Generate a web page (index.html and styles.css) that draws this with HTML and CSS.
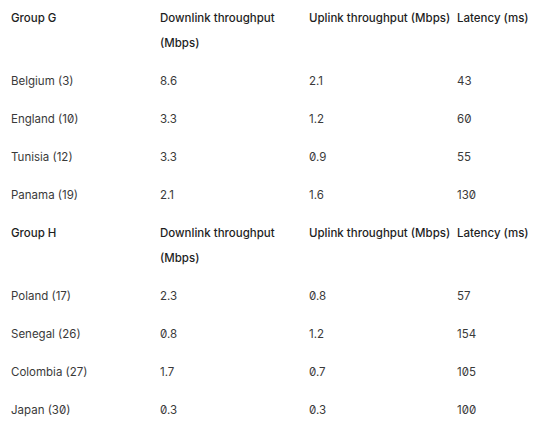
FILE: index.html
```html
<!DOCTYPE html>
<html>
<head>
<meta charset="utf-8">
<link rel="stylesheet" href="styles.css">
</head>
<body>
<div class="table">
  <div class="row head">
    <div class="cell">Group G</div>
    <div class="cell">Downlink throughput<br>(Mbps)</div>
    <div class="cell">Uplink throughput (Mbps)</div>
    <div class="cell">Latency (ms)</div>
  </div>
  <div class="row"><div class="cell">Belgium (3)</div><div class="cell">8.6</div><div class="cell">2.1</div><div class="cell">43</div></div>
  <div class="row"><div class="cell">England (10)</div><div class="cell">3.3</div><div class="cell">1.2</div><div class="cell">60</div></div>
  <div class="row"><div class="cell">Tunisia (12)</div><div class="cell">3.3</div><div class="cell">0.9</div><div class="cell">55</div></div>
  <div class="row"><div class="cell">Panama (19)</div><div class="cell">2.1</div><div class="cell">1.6</div><div class="cell">130</div></div>
  <div class="row head">
    <div class="cell">Group H</div>
    <div class="cell">Downlink throughput<br>(Mbps)</div>
    <div class="cell">Uplink throughput (Mbps)</div>
    <div class="cell">Latency (ms)</div>
  </div>
  <div class="row"><div class="cell">Poland (17)</div><div class="cell">2.3</div><div class="cell">0.8</div><div class="cell">57</div></div>
  <div class="row"><div class="cell">Senegal (26)</div><div class="cell">0.8</div><div class="cell">1.2</div><div class="cell">154</div></div>
  <div class="row"><div class="cell">Colombia (27)</div><div class="cell">1.7</div><div class="cell">0.7</div><div class="cell">105</div></div>
  <div class="row"><div class="cell">Japan (30)</div><div class="cell">0.3</div><div class="cell">0.3</div><div class="cell">100</div></div>
</div>
</body>
</html>
```
FILE: styles.css
```css
html, body {
  margin: 0;
  background: #fff;
}
.table {
  display: flex;
  flex-direction: column;
  padding-top: 6px;
  font-family: Inter, "Noto Sans", sans-serif;
  font-size: 11.5px;
  line-height: 25px;
  color: #3a3a3a;
  font-feature-settings: "zero" 1;
}
.row {
  display: grid;
  grid-template-columns: 149px 149px 148px 1fr;
  padding: 0 0 13px 0;
}
.cell {
  padding-left: 11px;
  white-space: nowrap;
}
.head {
  color: #1e1e1e;
  font-weight: 500;
}
```
